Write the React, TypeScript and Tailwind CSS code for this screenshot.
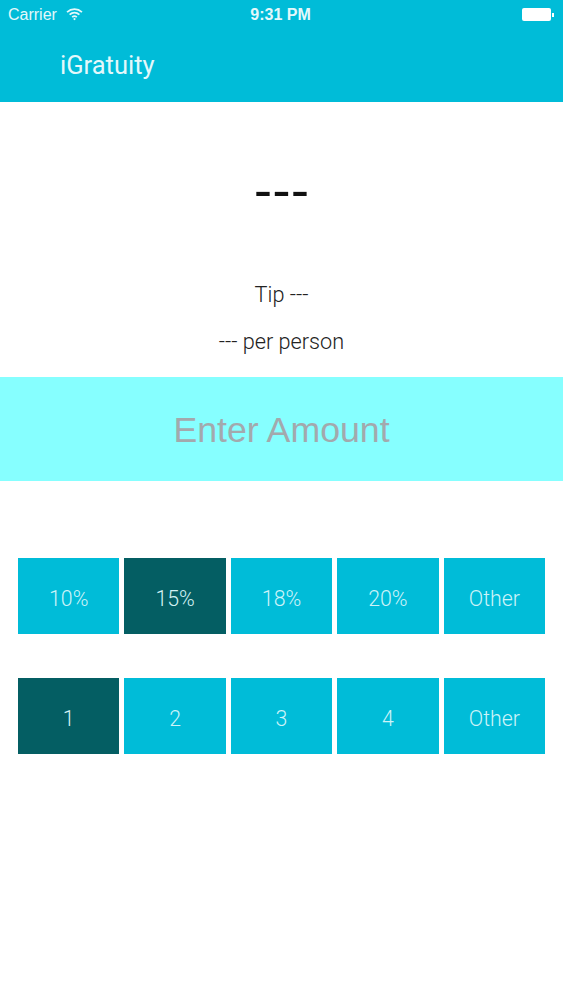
import React from "react";

const tips = ["10%", "15%", "18%", "20%", "Other"];
const people = ["1", "2", "3", "4", "Other"];

function Row({ items, active }: { items: string[]; active: number }) {
  return (
    <div className="flex gap-[5px] pl-[18px] pr-[18px]">
      {items.map((t, i) => (
        <div
          key={t}
          className={
            i === active
              ? "flex h-[76px] flex-1 items-center justify-center bg-[#045e63] pt-[6px] text-[21.3px] font-light text-[#d2f1f3]"
              : "flex h-[76px] flex-1 items-center justify-center bg-[#00bcd8] pt-[6px] text-[21.3px] font-light text-[#cdf3f8]"
          }
        >
          {t}
        </div>
      ))}
    </div>
  );
}

export default function App() {
  return (
    <div className="flex h-[1000px] w-[563px] flex-col overflow-hidden bg-white font-['Roboto',sans-serif]">
      <div className="h-[102px] bg-[#00bcd8] text-[#e4f8fb]">
        <div className="relative flex h-[29px] items-center pl-[8px] font-['Liberation_Sans',sans-serif] text-[16px]">
          <span>Carrier</span>
          <svg className="mb-[2px] ml-[9px]" width="17" height="14" viewBox="0 0 16 12" fill="none" stroke="currentColor" strokeWidth="1.7">
            <path d="M1 4.2C5 .6 11 .6 15 4.2" />
            <path d="M3.4 6.6c2.7-2.4 6.5-2.4 9.2 0" />
            <path d="M5.8 8.9c1.3-1.1 3.1-1.1 4.4 0" />
            <circle cx="8" cy="10.8" r="1" fill="currentColor" stroke="none" />
          </svg>
          <span className="absolute left-0 right-[2px] text-center text-[16px] font-bold">9:31 PM</span>
          <div className="absolute left-[522px] top-[8px] flex items-center">
            <div className="h-[13px] w-[29px] rounded-[2px] bg-white" />
            <div className="ml-[1px] h-[4px] w-[1.5px] bg-white" />
          </div>
        </div>
        <div className="pl-[60px] pt-[3px] text-[25.5px] leading-[66px]">iGratuity</div>
      </div>

      <div className="mt-[60px] pl-[3px] text-center text-[56px] leading-[60px] font-normal tracking-[3px] text-[#111]">---</div>
      <div className="mt-[58px] text-center text-[21.7px] leading-[30px] font-light text-[#222]">Tip ---</div>
      <div className="mt-[17px] text-center text-[21.7px] leading-[30px] font-light text-[#222]">--- per person</div>

      <div className="mt-[20px] flex h-[104px] items-center justify-center bg-[#86ffff] pt-[3px] font-['Liberation_Sans',sans-serif] text-[35.7px] text-[#a3a9ad]">
        Enter Amount
      </div>

      <div className="mt-[77px] flex flex-col gap-[44px]">
        <Row items={tips} active={1} />
        <Row items={people} active={0} />
      </div>
    </div>
  );
}
